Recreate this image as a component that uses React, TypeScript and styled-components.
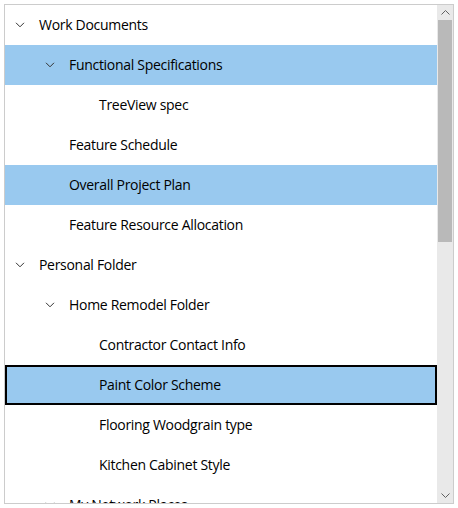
import React from "react";
import styled, { createGlobalStyle } from "styled-components";

const Global = createGlobalStyle`
  html, body { margin: 0; padding: 0; background: #ffffff; }
  body { font-family: "Open Sans", "Noto Sans", sans-serif; }
`;

const Page = styled.div`
  width: 458px;
  height: 508px;
  padding: 4px;
  box-sizing: border-box;
  background: #ffffff;
`;

const Frame = styled.div`
  width: 450px;
  height: 500px;
  box-sizing: border-box;
  border: 1px solid #cccccc;
  display: flex;
  overflow: hidden;
`;

const List = styled.div`
  flex: 1;
  display: flex;
  flex-direction: column;
  overflow: hidden;
`;

const Row = styled.div<{ $level: number; $hl?: boolean; $focus?: boolean }>`
  flex: 0 0 40px;
  height: 40px;
  display: flex;
  align-items: center;
  padding-left: ${(p) => 5 + p.$level * 30}px;
  background: ${(p) => (p.$hl ? "#99c9ef" : "transparent")};
  box-shadow: ${(p) => (p.$focus ? "inset 0 0 0 2px #000000" : "none")};
  color: #000000;
  font-size: 14px;
  white-space: nowrap;
`;

const ChevronSlot = styled.span`
  width: 20px;
  display: flex;
  justify-content: center;
  align-items: center;
`;

const Label = styled.span`
  margin-left: 9px;
  margin-top: -2px;
  letter-spacing: -0.3px;
`;

const Scrollbar = styled.div`
  flex: 0 0 16px;
  display: flex;
  flex-direction: column;
  background: #e9e9e9;
`;

const ArrowBtn = styled.div`
  height: 15px;
  display: flex;
  align-items: center;
  justify-content: center;
`;

const Thumb = styled.div`
  height: 222px;
  margin: 0 1px;
  background: #b9b9b9;
`;

const Spacer = styled.div`
  flex: 1;
`;

const Chevron = () => (
  <svg width="10" height="6" viewBox="0 0 10 6">
    <path d="M1 0.8 L5 4.8 L9 0.8" fill="none" stroke="#333" strokeWidth="1" />
  </svg>
);

const SmallArrow = ({ up }: { up?: boolean }) => (
  <svg width="9" height="5" viewBox="0 0 9 5">
    <path
      d={up ? "M0.5 4.5 L4.5 0.5 L8.5 4.5" : "M0.5 0.5 L4.5 4.5 L8.5 0.5"}
      fill="none"
      stroke="#606060"
      strokeWidth="1"
    />
  </svg>
);

type Item = { label: string; level: number; expanded?: boolean; hl?: boolean; focus?: boolean };

const items: Item[] = [
  { label: "Work Documents", level: 0, expanded: true },
  { label: "Functional Specifications", level: 1, expanded: true, hl: true },
  { label: "TreeView spec", level: 2 },
  { label: "Feature Schedule", level: 1 },
  { label: "Overall Project Plan", level: 1, hl: true },
  { label: "Feature Resource Allocation", level: 1 },
  { label: "Personal Folder", level: 0, expanded: true },
  { label: "Home Remodel Folder", level: 1, expanded: true },
  { label: "Contractor Contact Info", level: 2 },
  { label: "Paint Color Scheme", level: 2, hl: true, focus: true },
  { label: "Flooring Woodgrain type", level: 2 },
  { label: "Kitchen Cabinet Style", level: 2 },
  { label: "My Network Places", level: 1, expanded: true },
];

export default function App() {
  return (
    <Page>
      <Global />
      <Frame>
        <List>
          {items.map((it) => (
            <Row key={it.label} $level={it.level} $hl={it.hl} $focus={it.focus}>
              <ChevronSlot>{it.expanded ? <Chevron /> : null}</ChevronSlot>
              <Label>{it.label}</Label>
            </Row>
          ))}
        </List>
        <Scrollbar>
          <ArrowBtn>
            <SmallArrow up />
          </ArrowBtn>
          <Thumb />
          <Spacer />
          <ArrowBtn>
            <SmallArrow />
          </ArrowBtn>
        </Scrollbar>
      </Frame>
    </Page>
  );
}
